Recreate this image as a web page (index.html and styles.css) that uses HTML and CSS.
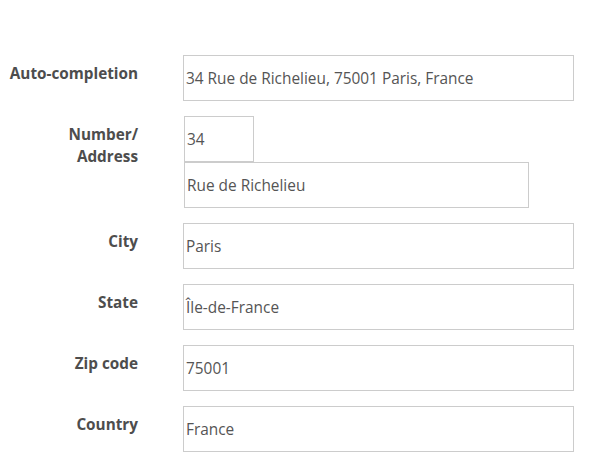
FILE: index.html
```html
<!DOCTYPE html>
<html lang="en">
<head>
<meta charset="utf-8">
<title>Address form</title>
<link rel="stylesheet" href="styles.css">
</head>
<body>
<form class="form">
  <div class="row">
    <div class="label">Auto-completion</div>
    <div class="controls">
      <div class="field field-full">34 Rue de Richelieu, 75001 Paris, France</div>
    </div>
  </div>
  <div class="row">
    <div class="label">Number/<br>Address</div>
    <div class="controls controls-stack">
      <div class="field field-number">34</div>
      <div class="field field-address">Rue de Richelieu</div>
    </div>
  </div>
  <div class="row">
    <div class="label">City</div>
    <div class="controls">
      <div class="field field-full">Paris</div>
    </div>
  </div>
  <div class="row">
    <div class="label">State</div>
    <div class="controls">
      <div class="field field-full">Île-de-France</div>
    </div>
  </div>
  <div class="row">
    <div class="label">Zip code</div>
    <div class="controls">
      <div class="field field-full">75001</div>
    </div>
  </div>
  <div class="row">
    <div class="label">Country</div>
    <div class="controls">
      <div class="field field-full">France</div>
    </div>
  </div>
</form>
</body>
</html>
```

FILE: styles.css
```css
html, body {
  margin: 0;
  padding: 0;
  background: #ffffff;
}

body {
  font-family: "Open Sans", "Noto Sans", sans-serif;
  color: #555555;
}

.form {
  display: flex;
  flex-direction: column;
  gap: 15px;
  padding: 55px 0 0 8px;
}

.row {
  display: grid;
  grid-template-columns: 130px 391px;
  column-gap: 45px;
  align-items: start;
}

.label {
  text-align: right;
  font-weight: 700;
  font-size: 15.3px;
  line-height: 22px;
  padding-top: 7px;
  color: #4d4d4d;
}

.controls {
  display: flex;
  flex-direction: column;
}

.controls-stack {
  padding-left: 1px;
}

.field {
  box-sizing: border-box;
  height: 46px;
  border: 1px solid #cccccc;
  display: flex;
  align-items: center;
  padding: 0 2px;
  font-size: 15.4px;
  color: #555555;
  white-space: nowrap;
}

.field-full {
  width: 391px;
}

.field-number {
  width: 70px;
}

.field-address {
  width: 345px;
}
```
